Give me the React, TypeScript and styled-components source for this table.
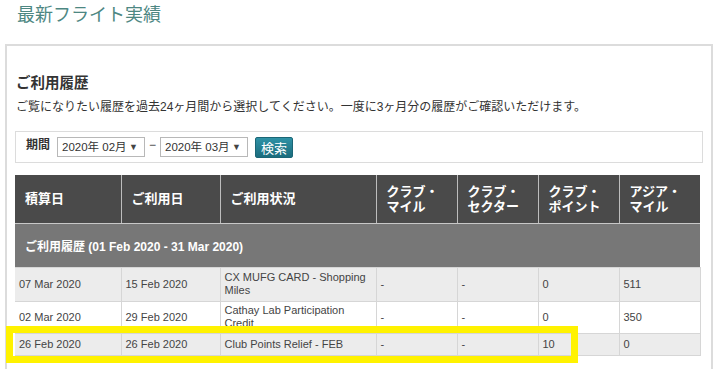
import React from "react";
import styled, { createGlobalStyle } from "styled-components";

const Global = createGlobalStyle`
  html, body { margin: 0; padding: 0; background: #fff; }
  body { font-family: "Liberation Sans", "Noto Sans CJK JP", sans-serif; color: #333; }
  * { box-sizing: border-box; }
`;

const Page = styled.div`
  position: relative;
  width: 715px;
  height: 369px;
  overflow: hidden;
`;

const Title = styled.h1`
  margin: 0;
  padding: 4px 0 0 17px;
  font-size: 18px;
  line-height: 22px;
  font-weight: normal;
  color: #4d8782;
`;

const Panel = styled.section`
  margin: 18px 0 0 5px;
  width: 708px;
  height: 340px;
  border: 2px solid #dcdcdc;
  border-bottom: none;
  padding: 27px 0 0 8px;
`;

const Heading = styled.h2`
  margin: 0;
  font-size: 14.5px;
  line-height: 20px;
  font-weight: bold;
  color: #333;
  padding-left: 1px;
`;

const Desc = styled.p`
  margin: 5px 0 0;
  font-size: 12px;
  line-height: 18px;
  color: #333;
  padding-left: 1px;
`;

const FilterBox = styled.div`
  margin-top: 15px;
  width: 688px;
  height: 32px;
  border: 1px solid #dcdcdc;
  display: flex;
  align-items: center;
  padding: 0 0 0 10px;
`;

const FilterLabel = styled.span`
  font-size: 12px;
  font-weight: bold;
  line-height: 14px;
  margin: -5px 7px 0 0;
  color: #333;
`;

const Select = styled.div<{ $w: number }>`
  width: ${(p) => p.$w}px;
  height: 20px;
  border: 1px solid #b8b8b8;
  background: #fff;
  display: flex;
  align-items: center;
  justify-content: space-between;
  padding: 0 6px 0 4px;
  font-size: 11.5px;
  line-height: 18px;
  white-space: nowrap;
  color: #333;
`;

const Arrow = styled.span`
  font-size: 9px;
  color: #444;
`;

const Dash = styled.span`
  width: 15px;
  text-align: center;
  font-size: 12px;
  margin-top: -4px;
  color: #444;
`;

const Button = styled.button`
  margin-left: 7px;
  width: 38px;
  height: 21px;
  padding: 0;
  border: 1px solid #1b6676;
  border-radius: 2px;
  background: linear-gradient(#2f92a6, #1b6c7d);
  color: #fff;
  font-family: "Noto Sans CJK JP", sans-serif;
  font-size: 13px;
  line-height: 19px;
`;

const Table = styled.table`
  margin-top: 12px;
  width: 685px;
  border-collapse: collapse;
  table-layout: fixed;
`;

const Th = styled.th`
  background: #4a4a4a;
  color: #fff;
  font-size: 13px;
  font-weight: bold;
  line-height: 15px;
  text-align: left;
  padding: 0 6px 0 10px;
  height: 48px;
  border-left: 1px solid #bdbdbd;
  border-bottom: 1px solid #c8c8c8;
  &:first-child { border-left: none; }
`;

const GroupCell = styled.td`
  background: #777;
  color: #fff;
  font-size: 12px;
  font-weight: bold;
  height: 44px;
  padding: 0 0 0 10px;
`;

const Row = styled.tr<{ $h: number; $alt: boolean }>`
  height: ${(p) => p.$h}px;
  background: ${(p) => (p.$alt ? "#ececec" : "#fff")};
`;

const Td = styled.td`
  font-size: 11px;
  line-height: 13px;
  color: #444;
  padding: 0 4px;
  vertical-align: middle;
  border: 1px solid #d6d6d6;
  &:first-child { border-left: none; }
`;

const Highlight = styled.div`
  position: absolute;
  left: 6px;
  top: 326px;
  width: 572px;
  height: 37px;
  border: 7px solid #fff200;
  pointer-events: none;
`;

const cols = [106, 99, 156, 81, 81, 81, 81];

const rows = [
  { h: 34, alt: true, c: ["07 Mar 2020", "15 Feb 2020", "CX MUFG CARD - Shopping Miles", "-", "-", "0", "511"] },
  { h: 32, alt: false, c: ["02 Mar 2020", "29 Feb 2020", "Cathay Lab Participation Credit", "-", "-", "0", "350"] },
  { h: 22, alt: true, c: ["26 Feb 2020", "26 Feb 2020", "Club Points Relief - FEB", "-", "-", "10", "0"] },
];

export default function App() {
  return (
    <Page>
      <Global />
      <Title>最新フライト実績</Title>
      <Panel>
        <Heading>ご利用履歴</Heading>
        <Desc>ご覧になりたい履歴を過去24ヶ月間から選択してください。一度に3ヶ月分の履歴がご確認いただけます。</Desc>
        <FilterBox>
          <FilterLabel>期間</FilterLabel>
          <Select $w={88}>
            <span>2020年 02月</span>
            <Arrow>▼</Arrow>
          </Select>
          <Dash>−</Dash>
          <Select $w={88}>
            <span>2020年 03月</span>
            <Arrow>▼</Arrow>
          </Select>
          <Button>検索</Button>
        </FilterBox>
        <Table>
          <colgroup>
            {cols.map((w, i) => (
              <col key={i} style={{ width: w }} />
            ))}
          </colgroup>
          <thead>
            <tr>
              <Th>積算日</Th>
              <Th>ご利用日</Th>
              <Th>ご利用状況</Th>
              <Th>クラブ・<br />マイル</Th>
              <Th>クラブ・<br />セクター</Th>
              <Th>クラブ・<br />ポイント</Th>
              <Th>アジア・<br />マイル</Th>
            </tr>
          </thead>
          <tbody>
            <tr>
              <GroupCell colSpan={7}>ご利用履歴 (01 Feb 2020 - 31 Mar 2020)</GroupCell>
            </tr>
            {rows.map((r, i) => (
              <Row key={i} $h={r.h} $alt={r.alt}>
                {r.c.map((t, j) => (
                  <Td key={j}>{t}</Td>
                ))}
              </Row>
            ))}
          </tbody>
        </Table>
      </Panel>
      <Highlight />
    </Page>
  );
}
